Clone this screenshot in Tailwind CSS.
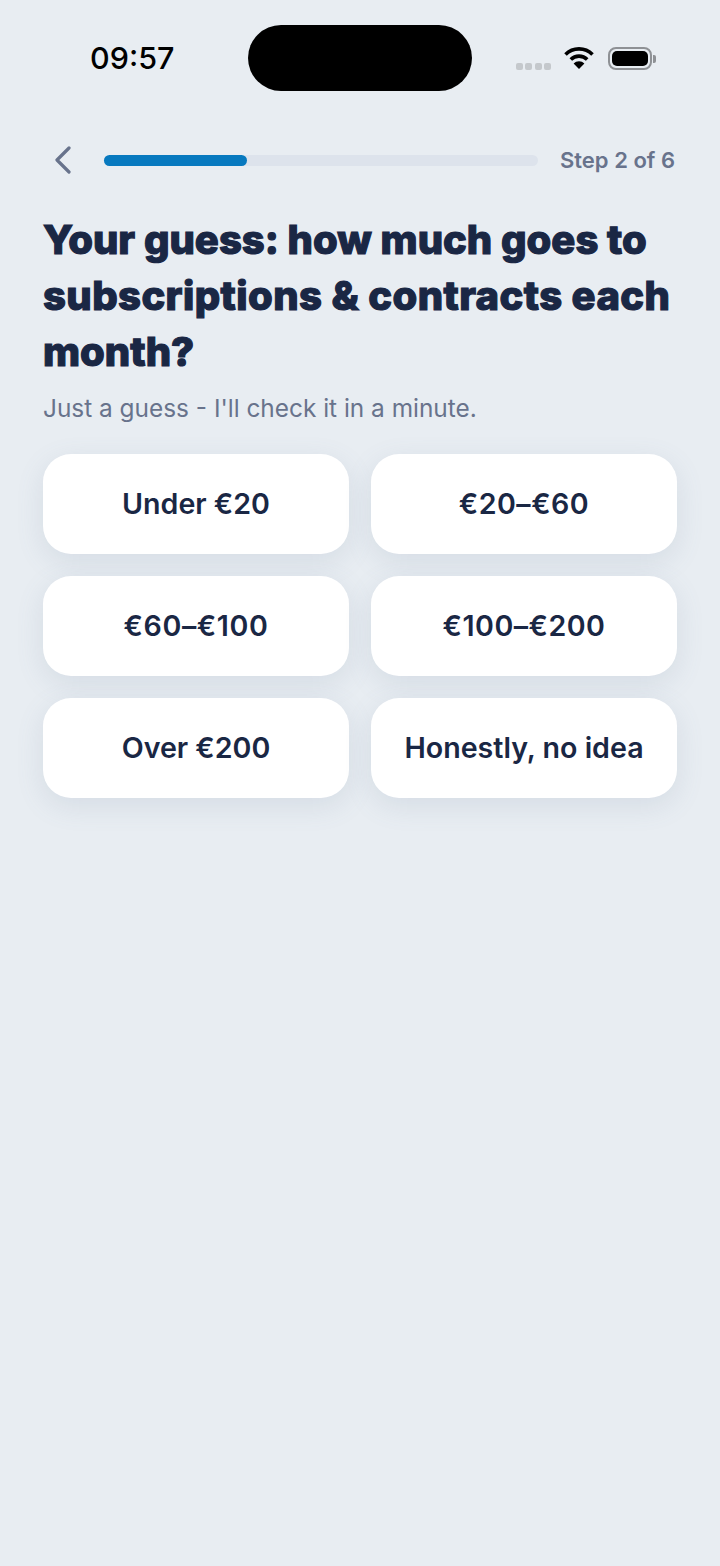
<!DOCTYPE html>
<html lang="en">
<head>
    <meta charset="UTF-8">
    <meta name="viewport" content="width=device-width, initial-scale=1.0">
    <title>Step 2 of 6</title>
    <script src="https://cdn.jsdelivr.net/npm/@tailwindcss/browser@4"></script>
</head>
<body class="bg-[#e8edf2] font-['Inter','Liberation_Sans',sans-serif]">
    <div class="h-[1566px] w-[720px] overflow-hidden">
        <!-- status bar -->
        <div class="flex h-[116px] items-start pt-[25px]">
            <div class="w-[248px] pt-[14px] pl-[90px] text-[30.5px] leading-[38px] font-medium text-black">09:57</div>
            <div class="h-[66px] w-[224px] rounded-[33px] bg-black"></div>
            <div class="flex items-start pt-[22px] pl-[44px]">
                <div class="mt-[16px] flex gap-[2.3px]">
                    <span class="size-[7px] rounded-[2px] bg-[#c4c8cc]"></span>
                    <span class="size-[7px] rounded-[2px] bg-[#c4c8cc]"></span>
                    <span class="size-[7px] rounded-[2px] bg-[#c4c8cc]"></span>
                    <span class="size-[7px] rounded-[2px] bg-[#c4c8cc]"></span>
                </div>
                <svg class="ml-[13px]" width="30" height="22" viewBox="0 0 30 22">
                    <path d="M1.5 7.5 A19 19 0 0 1 28.5 7.5" fill="none" stroke="#000" stroke-width="3.6" />
                    <path d="M6.8 12.6 A11.5 11.5 0 0 1 23.2 12.6" fill="none" stroke="#000" stroke-width="3.6" />
                    <path d="M15 22 L9.6 16.6 A7.6 7.6 0 0 1 20.4 16.6 Z" fill="#000" />
                </svg>
                <div class="ml-[14px] flex items-center">
                    <div class="h-[23px] w-[44px] rounded-[8px] border-2 border-[#8e9195] p-[2px]">
                        <div class="h-full w-full rounded-[5px] bg-black"></div>
                    </div>
                    <div class="ml-[1px] h-[8px] w-[3px] rounded-r-[2px] bg-[#8e9195]"></div>
                </div>
            </div>
        </div>

        <div class="px-[43px]">
            <!-- progress header -->
            <div class="flex h-[88px] items-center">
                <svg class="ml-[11px]" width="18" height="28" viewBox="0 0 18 28">
                    <path d="M15 2 L3 14 L15 26" fill="none" stroke="#68738c" stroke-width="3.2" stroke-linecap="round" stroke-linejoin="round" />
                </svg>
                <div class="ml-[32px] h-[11px] w-[434px] rounded-full bg-[#dde3ec]">
                    <div class="h-full w-[143px] rounded-full bg-[#0779bf]"></div>
                </div>
                <div class="ml-[22px] text-[22px] leading-[28px] font-semibold whitespace-nowrap text-[#68738c]">Step 2 of 6</div>
            </div>

            <h1 class="mt-[8px] text-[40px] leading-[56px] font-extrabold text-[#1a2744] [-webkit-text-stroke:1.2px_#1a2744]">Your guess: how much goes to <span class="tracking-[0.4px]">subscriptions &amp; contracts each</span> month?</h1>
            <p class="mt-[10px] text-[24.4px] leading-[36px] text-[#68738c]">Just a guess - I'll check it in a minute.</p>

            <div class="mt-[28px] grid grid-cols-2 gap-[22px]">
                <button class="h-[100px] rounded-[28px] bg-white text-[28.6px] font-semibold text-[#1a2744] shadow-[0_8px_28px_rgba(100,120,150,0.14)]">Under €20</button>
                <button class="h-[100px] rounded-[28px] bg-white text-[28.6px] font-semibold tracking-[0.5px] text-[#1a2744] shadow-[0_8px_28px_rgba(100,120,150,0.14)]">€20–€60</button>
                <button class="h-[100px] rounded-[28px] bg-white text-[28.6px] font-semibold tracking-[0.6px] text-[#1a2744] shadow-[0_8px_28px_rgba(100,120,150,0.14)]">€60–€100</button>
                <button class="h-[100px] rounded-[28px] bg-white text-[28.6px] font-semibold tracking-[0.5px] text-[#1a2744] shadow-[0_8px_28px_rgba(100,120,150,0.14)]">€100–€200</button>
                <button class="h-[100px] rounded-[28px] bg-white text-[28.6px] font-semibold text-[#1a2744] shadow-[0_8px_28px_rgba(100,120,150,0.14)]">Over €200</button>
                <button class="h-[100px] rounded-[28px] bg-white text-[28.6px] font-semibold text-[#1a2744] shadow-[0_8px_28px_rgba(100,120,150,0.14)]">Honestly, no idea</button>
            </div>
        </div>
    </div>
</body>
</html>
